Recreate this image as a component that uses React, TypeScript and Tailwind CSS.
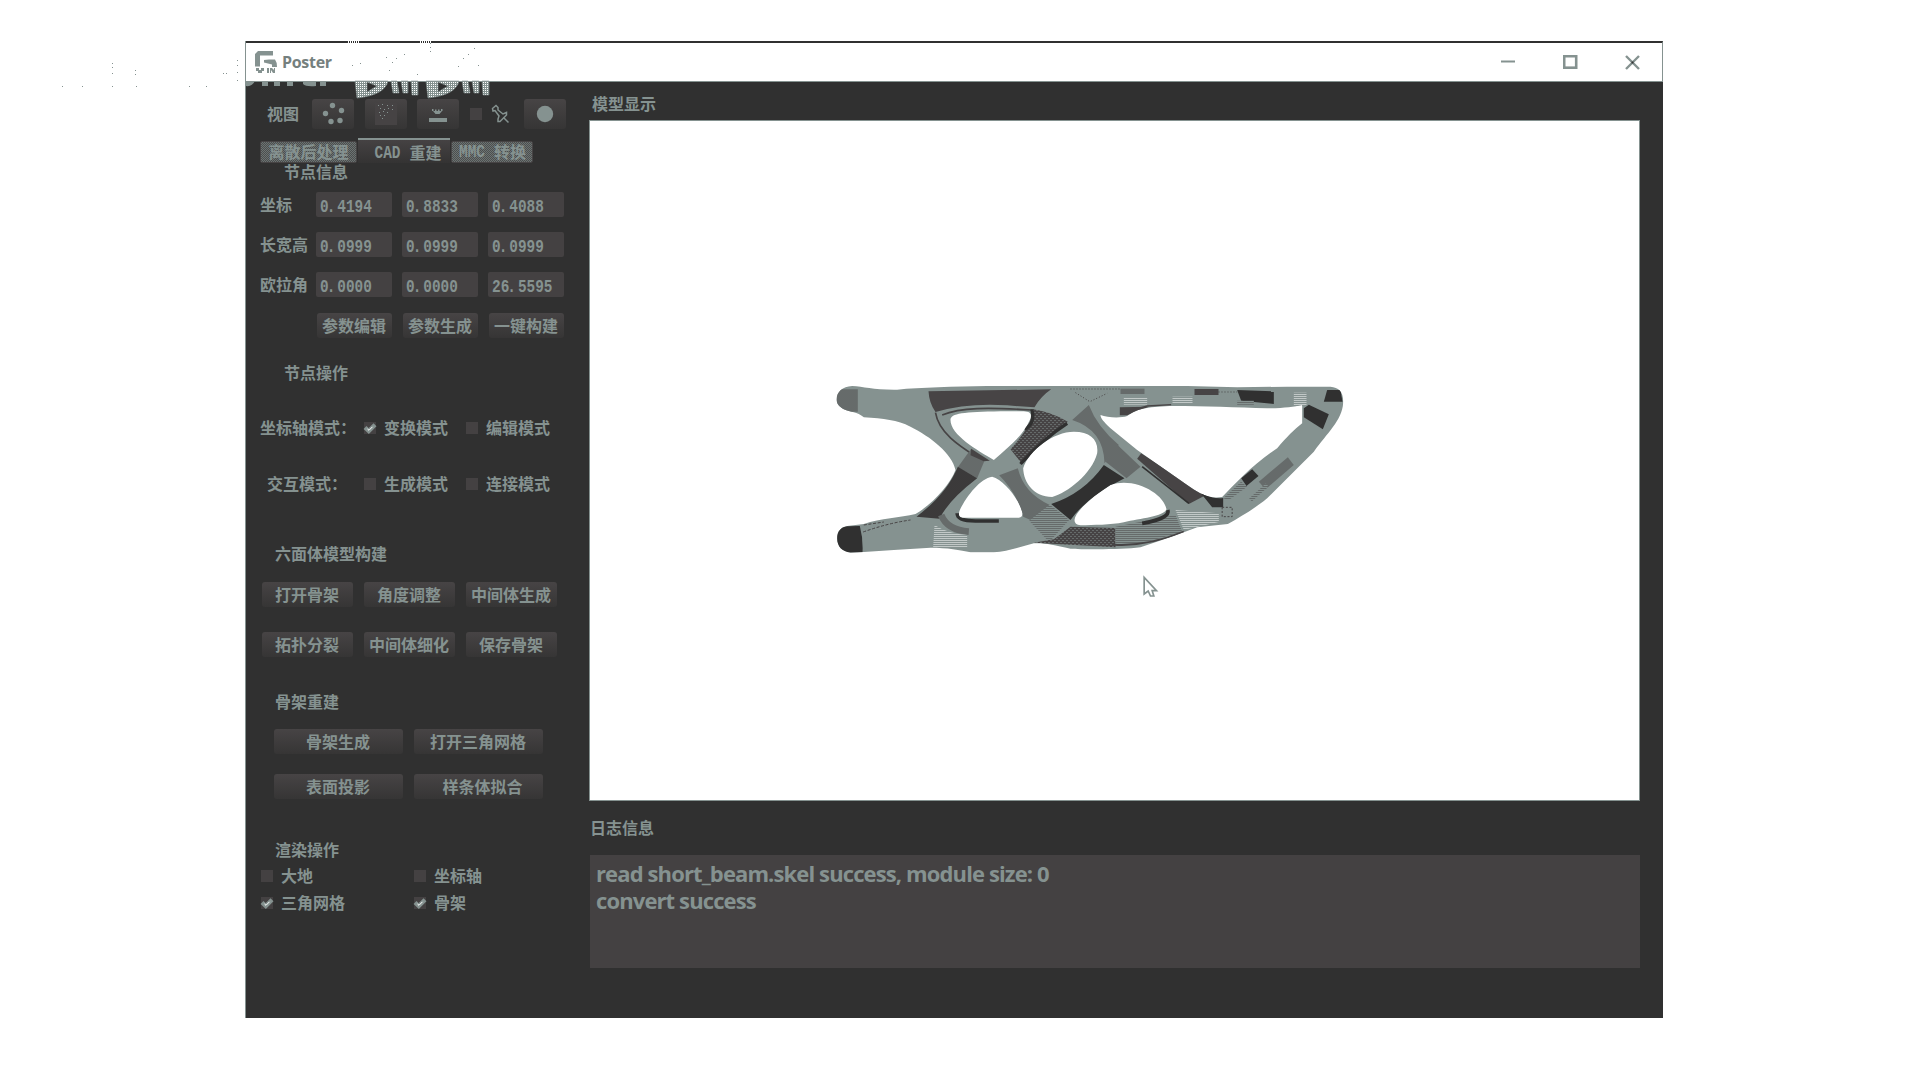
import React from "react";

const cjk = "font-['Noto_Sans_CJK_SC',sans-serif] text-[16px] leading-[16px] font-bold text-[#859290] whitespace-nowrap";

const Label = ({ children, className = "" }: { children: React.ReactNode; className?: string }) => (
  <div className={`${cjk} -translate-x-px -translate-y-px ${className}`}>{children}</div>
);

const Btn = ({ children, className = "" }: { children: React.ReactNode; className?: string }) => (
  <button
    className={`${cjk} flex h-[25px] shrink-0 items-center justify-center rounded-[3px] bg-linear-to-b from-[#474445] to-[#363535] pr-px pb-[2px] ${className}`}
  >
    {children}
  </button>
);

const Field = ({ value }: { value: string }) => {
  const [whole, fraction] = value.split(".");
  return (
    <div className="flex h-[25px] w-[76px] items-center rounded-[2px] bg-[#444142] pl-[4px]">
      <span className="mt-[4px] origin-center scale-y-[1.22] font-['Liberation_Mono',monospace] text-[14.4px] leading-[16px] font-bold text-[#859290]">
        {whole}
        <span className="-ml-[2px] tracking-[2px]">.</span>
        {fraction}
      </span>
    </div>
  );
};

const Check = ({ on = false }: { on?: boolean }) => (
  <span className="flex h-[12px] w-[12px] shrink-0 items-center justify-center bg-[#444142]">
    {on && (
      <svg width="12" height="12" viewBox="0 0 12 12" className="overflow-visible">
        <path d="M1 5.5L4.8 9L11 2.8" fill="none" stroke="#859290" strokeWidth="4.2" />
        <path d="M3.5 7L5 8.3L8.5 4.8" fill="none" stroke="#fff" strokeWidth="1" />
      </svg>
    )}
  </span>
);

const Option = ({ label, on, className = "" }: { label: string; on?: boolean; className?: string }) => (
  <div className={`flex h-4 items-center gap-[9px] ${className}`}>
    <Check on={on} />
    <Label>{label}</Label>
  </div>
);

const ToolBtn = ({ children, className = "" }: { children: React.ReactNode; className?: string }) => (
  <button
    className={`flex h-[30px] w-[42px] shrink-0 items-center justify-center rounded-[3px] bg-linear-to-b from-[#474445] to-[#363535] ${className}`}
  >
    {children}
  </button>
);

const rows = [
  { label: "坐标", values: ["0.4194", "0.8833", "0.4088"], top: "mt-[11px]" },
  { label: "长宽高", values: ["0.0999", "0.0999", "0.0999"], top: "mt-[15px]" },
  { label: "欧拉角", values: ["0.0000", "0.0000", "26.5595"], top: "mt-[15px]" },
];

const Sidebar = () => (
  <aside className="-ml-px flex w-[344px] shrink-0 flex-col">
    <div className="mt-[17px] flex h-[30px] items-center pl-[23px]">
      <Label className="w-[44px]">视图</Label>
      <ToolBtn>
        <svg width="24" height="24" viewBox="0 0 24 24" fill="#859290">
          <circle cx="11.5" cy="3.5" r="2.7" />
          <circle cx="20.5" cy="8.5" r="2.7" />
          <circle cx="4.5" cy="11.5" r="2.7" />
          <circle cx="19" cy="18.5" r="2.7" />
          <circle cx="10" cy="19.5" r="2.7" />
        </svg>
      </ToolBtn>
      <ToolBtn className="ml-[11px]">
        <svg width="22" height="22" viewBox="0 0 22 22">
          <rect width="22" height="22" fill="#464344" />
          <path
            d="M3 2h1v1H3zM7 1h1v1H7zM12 2h1v1h-1zM17 2h1v1h-1zM5 5h1v1H5zM9 6h1v1H9zM13 5h1v1h-1zM17 6h1v1h-1zM4 9h1v1H4zM8 8h1v1H8zM12 9h1v1h-1zM5 12h1v1H5zM9 12h1v1H9zM7 15h1v1H7z"
            fill="#859290"
          />
        </svg>
      </ToolBtn>
      <ToolBtn className="ml-[10px]">
        <svg width="20" height="20" viewBox="0 0 20 20" fill="#859290">
          <path d="M4 5h1.500v2H4zM7 5.500h1.500v2H7zM10 5.500h1.500v2H10zM13 5h1.500v2H13zM5 7h9l-2.500 3h-4z" />
          <rect x="1" y="14" width="18" height="4" />
        </svg>
      </ToolBtn>
      <span className="ml-[11px] flex w-[12px]">
        <Check />
      </span>
      <svg width="20" height="20" viewBox="0 0 20 20" className="ml-[9px]" fill="none" stroke="#859290" strokeWidth="1.500">
        <path d="M1.500 4.500L5 1.500L7 3.500V6L12 10L15.500 8.500V11L9 17.500H7V15L8 12L4 6.500L2 7z" />
        <path d="M12.500 13.500L17.500 18.500" />
      </svg>
      <ToolBtn className="ml-[13px]">
        <svg width="18" height="18" viewBox="0 0 18 18">
          <circle cx="9" cy="9" r="8.200" fill="#859290" />
        </svg>
      </ToolBtn>
    </div>

    <div className="mt-[9px] flex h-[25px] items-end pl-[15px]">
      <div className={`${cjk} mr-px flex h-[22px] w-[97px] items-center justify-center rounded-[2px] border border-[#474445] bg-[repeating-conic-gradient(#6b7473_0_25%,#4d4e4e_0_50%)] bg-size-[2px_2px] pb-[2px]`}>
        离散后处理
      </div>
      <div className={`${cjk} flex h-[25px] w-[92px] items-center justify-center gap-[9px] border-t-2 border-[#859290] bg-linear-to-b from-[#454243] to-[#343333] pl-[8px]`}>
        <span className="mt-[2px] scale-y-[1.22] font-['Liberation_Mono',monospace] text-[14.4px]">CAD</span>
        <span>重建</span>
      </div>
      <div className={`${cjk} ml-px flex h-[22px] w-[82px] items-center gap-[9px] rounded-[2px] border border-[#474445] bg-[repeating-conic-gradient(#6b7473_0_25%,#4d4e4e_0_50%)] bg-size-[2px_2px] pb-[2px] pl-[7px]`}>
        <span className="mt-[2px] scale-y-[1.22] font-['Liberation_Mono',monospace] text-[14.4px]">MMC</span>
        <span>转换</span>
      </div>
    </div>

    <Label className="mt-px mb-px pl-[40px]">节点信息</Label>
    {rows.map((r) => (
      <div key={r.label} className={`flex items-center gap-[10px] pl-[16px] ${r.top}`}>
        <Label className="w-[45px]">{r.label}</Label>
        {r.values.map((v, i) => (
          <Field key={i} value={v} />
        ))}
      </div>
    ))}
    <div className="mt-[16px] flex gap-[11px] pl-[72px]">
      <Btn className="w-[75px]">参数编辑</Btn>
      <Btn className="w-[75px]">参数生成</Btn>
      <Btn className="w-[75px]">一键构建</Btn>
    </div>

    <Label className="mt-[27px] mb-px pl-[40px]">节点操作</Label>
    <div className="mt-[38px] flex h-4 pl-[16px]">
      <Label className="w-[103px]">坐标轴模式：</Label>
      <Option label="变换模式" on className="w-[102px]" />
      <Option label="编辑模式" />
    </div>
    <div className="mt-[40px] flex h-4 pl-[23px]">
      <Label className="w-[96px]">交互模式：</Label>
      <Option label="生成模式" className="w-[102px]" />
      <Option label="连接模式" />
    </div>

    <Label className="mt-[54px] pl-[31px]">六面体模型构建</Label>
    <div className="mt-[20px] flex gap-[11px] pl-[17px]">
      <Btn className="w-[91px]">打开骨架</Btn>
      <Btn className="w-[91px]">角度调整</Btn>
      <Btn className="w-[91px]">中间体生成</Btn>
    </div>
    <div className="mt-[25px] flex gap-[11px] pl-[17px]">
      <Btn className="w-[91px]">拓扑分裂</Btn>
      <Btn className="w-[91px]">中间体细化</Btn>
      <Btn className="w-[91px]">保存骨架</Btn>
    </div>

    <Label className="mt-[37px] pl-[31px]">骨架重建</Label>
    <div className="mt-[19px] flex gap-[11px] pl-[29px]">
      <Btn className="w-[129px]">骨架生成</Btn>
      <Btn className="w-[129px]">打开三角网格</Btn>
    </div>
    <div className="mt-[20px] flex gap-[11px] pl-[29px]">
      <Btn className="w-[129px]">表面投影</Btn>
      <Btn className="w-[129px] pl-[9px]">样条体拟合</Btn>
    </div>

    <Label className="mt-[43px] pl-[31px]">渲染操作</Label>
    <div className="mt-[10px] flex pl-[16px]">
      <Option label="大地" className="w-[153px]" />
      <Option label="坐标轴" />
    </div>
    <div className="mt-[11px] flex pl-[16px]">
      <Option label="三角网格" on className="w-[153px]" />
      <Option label="骨架" on />
    </div>
  </aside>
);

const Beam = () => (
  <svg className="h-full w-full" viewBox="590 121 1048 679">
    <defs>
      <pattern id="half" width="6" height="6" patternUnits="userSpaceOnUse">
        <rect width="6" height="6" fill="#859290" />
        <path d="M0 0h3v3H0zM3 3h3v3H3z" fill="#474445" />
      </pattern>
      <pattern id="light" width="12" height="12" patternUnits="userSpaceOnUse">
        <rect width="12" height="12" fill="#859290" />
        <path d="M0 0h3v3H0zM6 6h3v3H6zM6 0h3v3H6zM0 6h3v3H0z" fill="#474445" />
      </pattern>
      <pattern id="dim" width="12" height="12" patternUnits="userSpaceOnUse">
        <rect width="12" height="12" fill="#474445" />
        <path d="M0 0h3v3H0zM6 6h3v3H6z" fill="#859290" />
      </pattern>
      <pattern id="dark" width="6" height="6" patternUnits="userSpaceOnUse">
        <rect width="6" height="6" fill="#474445" />
        <path d="M0 0h3v3H0zM3 3h3v3H3z" fill="#303030" />
      </pattern>
      <pattern id="pale" width="12" height="12" patternUnits="userSpaceOnUse">
        <rect width="12" height="12" fill="#859290" />
        <path d="M0 0h3v3H0zM6 6h3v3H6zM6 0h3v3H6zM0 6h3v3H0z" fill="#fff" />
      </pattern>
      <clipPath id="body">
        <path
          clipRule="evenodd"
          d="M48 88C50 65 65 50 95 48C130 50 160 60 230 59C300 52 400 50 500 48H1100L1250 52L1400 50H1530C1555 52 1570 65 1568 100C1565 150 1520 190 1480 245L1340 385C1310 410 1270 435 1222 462L1130 472L1060 498L960 532C900 540 780 538 750 536C700 525 670 518 640 520C600 530 560 545 520 547H450C420 540 380 533 330 533L220 540L130 546L90 548C65 545 50 530 50 505C50 485 60 472 80 468L130 462C180 445 240 443 285 432C340 400 390 340 405 300C395 250 330 200 270 170C230 150 190 146 130 142C110 125 90 128 70 118C55 110 48 100 48 88Z
          M390 150C390 130 430 126 540 124H610C632 125 635 135 628 150C605 200 570 225 520 270C470 240 390 195 390 150Z
          M515 320C550 330 595 385 606 430Q606 443 595 443H425Q410 440 418 420C440 375 480 325 515 320Z
          M760 185C810 185 835 210 830 250C815 310 740 370 695 381C640 380 610 340 608 295C625 240 700 185 760 185Z
          M840 135C860 143 900 145 920 138C950 115 990 109 1060 108C1150 108 1250 112 1340 115C1390 115 1420 110 1445 105V160C1420 180 1400 200 1370 235C1300 280 1240 345 1205 381C1160 388 1130 365 1100 345L950 240L870 175C850 155 840 145 840 135Z
          M762 450C765 420 830 370 870 345C940 320 1030 370 1038 418C1030 440 960 445 910 457C870 465 820 465 780 466Q762 465 762 450Z"
        />
      </clipPath>
    </defs>
    <g transform="translate(820 370) scale(0.33333)">
      <g clipPath="url(#body)">
        <rect x="40" y="40" width="1540" height="520" fill="#859290" />
        <path d="M40 58H112V125H50z" fill="url(#half)" />
        <path d="M40 470L118 468Q128 505 126 548H40z" fill="#303030" />
        <path d="M324 64L692 58Q660 80 642 112L560 106Q440 98 345 126Q326 100 324 64z" fill="#474445" />
        <path d="M345 128C355 190 420 230 470 262M365 135C420 112 500 112 635 120" fill="none" stroke="#474445" strokeWidth="5" />
        <path d="M638 118Q690 125 742 155Q670 205 605 282L570 238Q640 160 638 118z" fill="url(#dim)" />
        <path d="M634 118Q645 160 612 178M740 160Q670 205 600 282" fill="none" stroke="#303030" strokeWidth="10" />
        <path d="M452 236L492 272L470 325L412 292z" fill="url(#half)" />
        <path d="M452 236L508 272L490 274L450 256z" fill="#474445" />
        <path d="M412 290L470 325Q385 390 357 446L288 440Q380 370 412 290z" fill="url(#dark)" />
        <path d="M536 316L592 295Q610 370 688 405L630 450L608 440Q590 370 536 316z" fill="url(#half)" />
        <path d="M688 404L746 450L686 516L626 452z" fill="url(#light)" />
        <path d="M692 402Q790 370 850 285L912 325Q800 380 750 450z" fill="#303030" />
        <path d="M750 470L885 474V532L640 518L700 508z" fill="url(#dim)" />
        <path d="M885 470L1065 435L1085 485L960 522L885 522z" fill="url(#light)" />
        <path d="M410 430Q410 453 465 453H535" fill="none" stroke="#303030" strokeWidth="11" />
        <path d="M362 435Q380 480 445 485" fill="none" stroke="url(#half)" strokeWidth="20" />
        <path d="M342 465Q380 490 440 495V532H338z" fill="url(#pale)" />
        <path d="M130 465L190 456M128 486Q200 460 270 450" fill="none" stroke="#474445" strokeWidth="3" strokeDasharray="9 5" />
        <path d="M805 105Q830 170 895 225L852 280Q850 180 755 150z" fill="url(#half)" />
        <path d="M888 222L960 290L918 325L855 275z" fill="url(#half)" />
        <path d="M962 250L1155 376L1105 402L950 266z" fill="#474445" />
        <path d="M965 290L1105 400" fill="none" stroke="#303030" strokeWidth="5" />
        <path d="M1140 368Q1180 388 1208 384V412L1175 412z" fill="#303030" />
        <path d="M1042 420Q1050 445 965 460" fill="none" stroke="#303030" strokeWidth="11" />
        <path d="M880 524Q980 530 1090 485" fill="none" stroke="#474445" strokeWidth="6" />
        <path d="M1065 420L1195 430V456L1090 480z" fill="url(#pale)" />
        <path d="M1205 412H1235V440H1205z" fill="none" stroke="#474445" strokeWidth="3" strokeDasharray="6 5" />
        <path d="M1208 385L1262 335L1280 350L1225 390z" fill="url(#light)" />
        <path d="M1262 325L1295 298L1314 318L1278 348z" fill="#303030" />
        <path d="M1315 335L1402 262L1420 285L1335 358z" fill="url(#half)" />
        <path d="M1450 115L1465 104L1525 133L1507 178L1450 142z" fill="#303030" />
        <path d="M1520 60H1560L1566 95H1510z" fill="#303030" />
        <path d="M1250 60L1360 64V102L1262 92z" fill="#303030" />
        <rect x="1122" y="57" width="72" height="18" fill="#474445" />
        <rect x="900" y="56" width="72" height="16" fill="url(#half)" />
        <rect x="910" y="84" width="70" height="20" fill="url(#pale)" />
        <rect x="1056" y="80" width="60" height="20" fill="url(#pale)" />
        <rect x="1420" y="68" width="38" height="40" fill="url(#pale)" />
        <path d="M898 112L985 110L920 136H898z" fill="#474445" />
        <path d="M900 130L980 108L1052 104" fill="none" stroke="#474445" strokeWidth="4" />
        <path d="M750 57H900M765 68L808 95L860 70M1194 66H1250" fill="none" stroke="#474445" strokeWidth="3" strokeDasharray="3 6" />
        <path d="M1250 98H1300M1290 390L1340 345" fill="none" stroke="url(#light)" strokeWidth="12" />
      </g>
      <path d="M971 622V672L983 663L990 678H1000L995 662H1008z" fill="#fff" stroke="#859290" strokeWidth="5" />
    </g>
  </svg>
);

const Watermark = () => (
  <svg className="pointer-events-none absolute top-0 left-[-201px]" width="460" height="60" viewBox="45 41 460 60">
    <defs>
      <pattern id="mesh" width="2" height="2" patternUnits="userSpaceOnUse">
        <rect width="2" height="2" fill="#859290" />
        <rect width="1" height="1" fill="#fff" />
      </pattern>
    </defs>
    <path
      d="M246 81H255Q252 87 246 86zM262 81H268V86H262zM274 81H280V86H274zM287 81H293V86H287zM303 81H316V86Q306 87 303 84zM320 81H326V86H320z"
      fill="#859290"
    />
    <g fill="url(#mesh)" stroke="#859290" strokeWidth="0.600">
      {[0, 71].map((dx) => (
        <g key={dx} transform={`translate(${dx} 0)`}>
          <path fillRule="evenodd" d="M355 81H388Q385 95 357 98zM367 82V92L377 86z" />
          <path d="M391 81H397L399 93H393zM401 81H408V93H403zM411 81H418V95H412z" />
        </g>
      ))}
    </g>
    <path
      d="M62 86h1v1h-1zM82 86h1v1h-1zM112 63h1v1h-1zM112 67h1v1h-1zM112 73h1v1h-1zM112 86h1v1h-1zM135 70h1v1h-1zM135 74h1v1h-1zM136 86h1v1h-1zM189 86h1v1h-1zM206 86h1v1h-1zM223 73h1v1h-1zM226 73h1v1h-1zM237 60h1v1h-1zM237 65h1v1h-1zM237 72h1v1h-1zM237 80h1v1h-1zM352 65h1v1h-1zM360 63h1v1h-1zM386 57h1v1h-1zM392 62h1v1h-1zM396 58h1v1h-1zM389 70h1v1h-1zM404 54h1v1h-1zM417 74h1v1h-1zM430 43h1v1h-1zM430 47h1v1h-1zM430 51h1v1h-1zM458 66h1v1h-1zM463 58h1v1h-1zM468 54h1v1h-1zM474 48h1v1h-1zM478 65h1v1h-1z"
      fill="#859290"
    />
    <path d="M348 42h12M420 42h12" stroke="#fff" strokeWidth="2" strokeDasharray="1 1" />
  </svg>
);

export default function App() {
  return (
    <div className="h-[1080px] w-[1920px] overflow-hidden bg-white pt-[41px] pl-[245px]">
      <div className="relative flex h-[977px] w-[1418px] flex-col border-l border-[#859290] bg-[#303030]">
        <header className="flex h-[41px] shrink-0 items-center border-t-2 border-r border-b border-t-[#303030] border-r-[#859290] border-b-[#859290] bg-white pl-[9px]">
          <svg width="22" height="23" viewBox="0 0 22 23" fill="#859290">
            <path d="M0 3L3 0H18V4.500H5V15.500H0z" />
            <path d="M9 9L14 8.500H20Q22 11 22 16H17V13.500L9 11.500z" />
            <path d="M1 17h3v2h2v-2h3v3H7v2H3v-2H1zM12 17h2v5h-2zM15 17h2l2 2v-2h1v5h-2l-2-3v3h-1z" />
          </svg>
          <span className="ml-[5px] font-['Open_Sans',sans-serif] text-[16px] leading-5 font-bold tracking-[-0.3px] text-[#75807e]">Poster</span>
          <div className="mr-[22px] ml-auto flex items-center gap-[47px]">
            <svg width="15" height="15" viewBox="0 0 15 15">
              <path d="M0 6.500H14" stroke="#859290" strokeWidth="2" />
            </svg>
            <svg width="15" height="15" viewBox="0 0 15 15">
              <rect x="1.200" y="1.200" width="12" height="11.500" fill="none" stroke="#859290" strokeWidth="2.600" />
            </svg>
            <svg width="15" height="15" viewBox="0 0 15 15">
              <path d="M1 1L14 14M14 1L1 14" stroke="#859290" strokeWidth="2.400" />
              <rect x="6.500" y="6.500" width="2" height="2" fill="#303030" />
            </svg>
          </div>
        </header>
        <div className="flex min-h-0 flex-1">
          <Sidebar />
          <main className="flex w-[1051px] flex-col">
            <Label className="mt-[14px] pl-[4px]">模型显示</Label>
            <div className="mt-[8px] h-[681px] border border-[#859290] bg-white">
              <Beam />
            </div>
            <Label className="mt-[19px] pl-[2px]">日志信息</Label>
            <div className="mt-[19px] ml-px h-[113px] bg-[#444142] pt-[5px] pl-[6px] font-['Open_Sans',sans-serif] text-[22px] leading-[27px] font-bold tracking-[-0.88px] whitespace-pre text-[#859290]">
              {"read short_beam.skel success, module size: 0\nconvert success"}
            </div>
          </main>
        </div>
        <Watermark />
      </div>
    </div>
  );
}
